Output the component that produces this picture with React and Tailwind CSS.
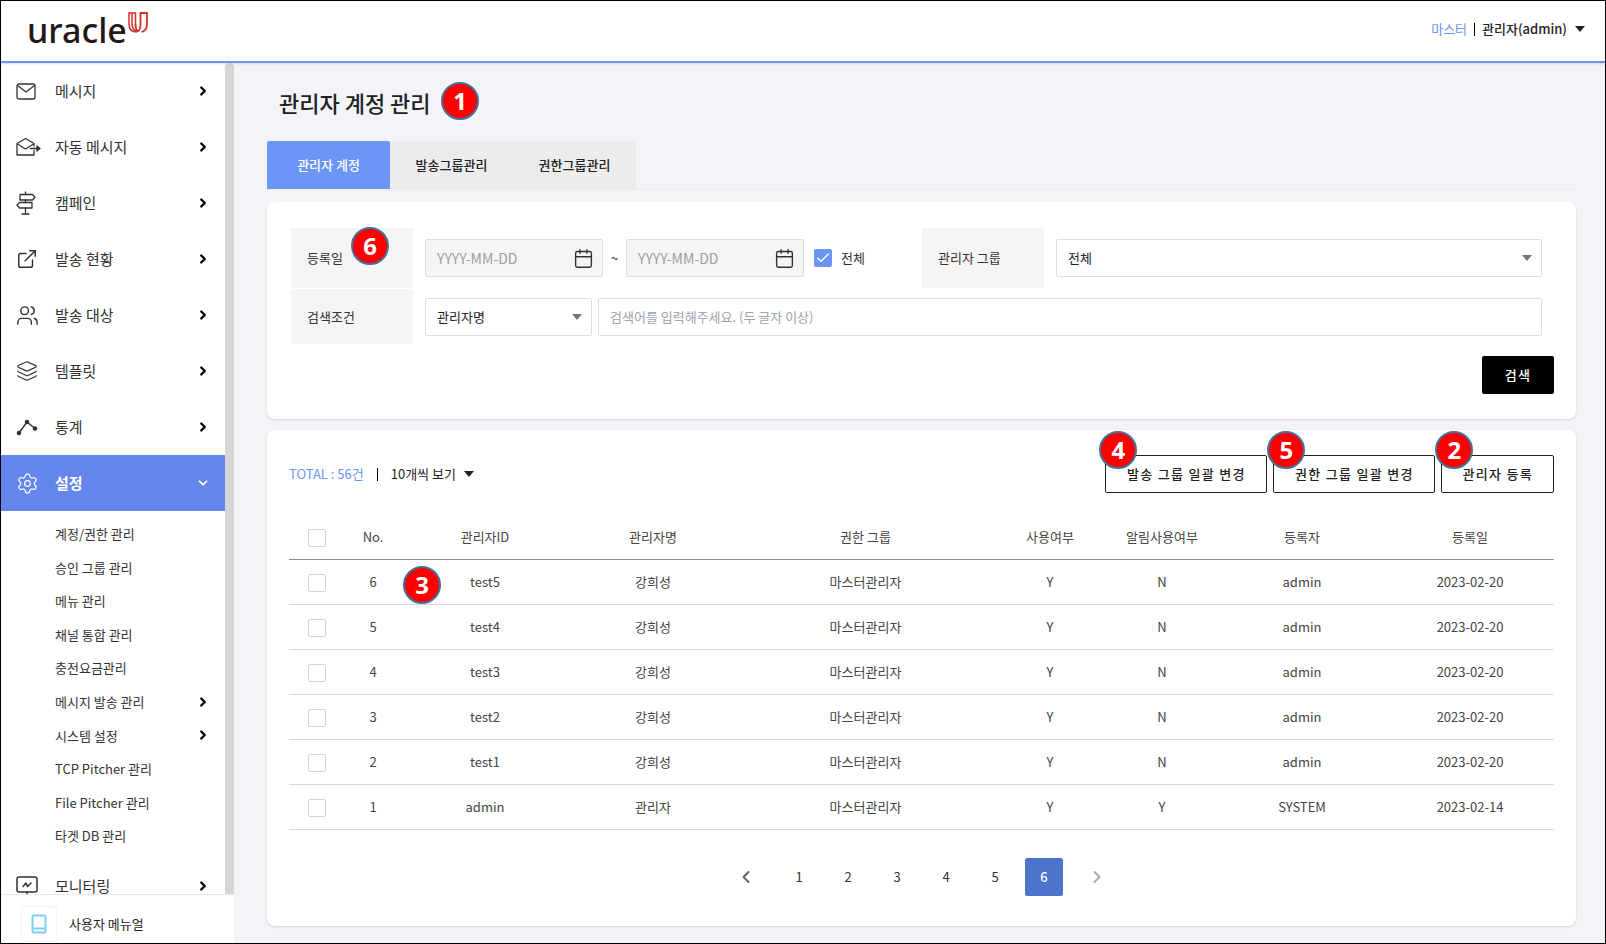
import React, { useState } from 'react'
import { Calendar, Check, ChevronDown, ChevronLeft, ChevronRight, ExternalLink, Layers, Settings, Users } from 'lucide-react'

const stroke = { fill: 'none', stroke: 'currentColor', strokeLinecap: 'round', strokeLinejoin: 'round' }

const MailIcon = () => (
  <svg width="20" height="17" viewBox="0 0 20 17" strokeWidth="1.3" {...stroke}>
    <rect x="1" y="1" width="18" height="15" rx="2" />
    <path d="M1.5 2.5 10 9 18.5 2.5" />
  </svg>
)

const AutoMailIcon = () => (
  <svg width="25" height="20" viewBox="0 0 25 20" strokeWidth="1.3" {...stroke}>
    <path d="M18 9V6.5L9.5 1.5 1 6.5V18h17v-4.500" />
    <path d="m1.5 7 8 5 8-5" />
    <path d="M14.500 11.500H23" />
    <path d="m21 9 3 2.500-3 2.500z" fill="currentColor" />
  </svg>
)

const SignpostIcon = () => (
  <svg width="20" height="24" viewBox="0 0 20 24" strokeWidth="1.3" {...stroke}>
    <path d="M9.5 1v2.5M9.5 9v2.5M9.5 17v6M6 23h7" />
    <path d="M4 3.5h12.500L19 6.200 16.500 9H4z" />
    <path d="M16 11.500H3.500L1 14.200 3.500 17H16z" />
  </svg>
)

const StatsIcon = () => (
  <svg width="22" height="18" viewBox="0 0 22 18" strokeWidth="1.4" {...stroke}>
    <path d="M3 15 11 4l8 6.500" />
    <g fill="currentColor" stroke="none">
      <circle cx="3" cy="15" r="2.300" />
      <circle cx="11" cy="4" r="2.300" />
      <circle cx="19" cy="10.500" r="2.300" />
    </g>
  </svg>
)

const MonitorIcon = () => (
  <svg width="22" height="20" viewBox="0 0 22 20" strokeWidth="1.5" {...stroke}>
    <rect x="1" y="1" width="20" height="15" rx="2" />
    <path d="m7 10.500 3-3.500 1.500 3.500L15 7M8 19h6M11 16v3" />
  </svg>
)

const ManualIcon = () => (
  <svg width="16" height="20" viewBox="0 0 16 20" fill="none" stroke="#7fd0ee" strokeWidth="2">
    <rect x="1.500" y="1.500" width="13" height="17" rx="1" />
    <path d="M1.500 14.500h13" />
  </svg>
)

const Caret = ({ className = '' }) => (
  <svg width="10" height="6" viewBox="0 0 10 6" className={className}>
    <path d="M0 0h10L5 6z" fill="currentColor" />
  </svg>
)

const menus = [
  { label: '메시지', icon: <MailIcon /> },
  { label: '자동 메시지', icon: <AutoMailIcon /> },
  { label: '캠페인', icon: <SignpostIcon /> },
  { label: '발송 현황', icon: <ExternalLink size={22} strokeWidth={1.6} /> },
  { label: '발송 대상', icon: <Users size={23} strokeWidth={1.5} /> },
  { label: '템플릿', icon: <Layers size={22} strokeWidth={1.3} /> },
  { label: '통계', icon: <StatsIcon /> }
]

const subMenus = [
  { label: '계정/권한 관리' },
  { label: '승인 그룹 관리' },
  { label: '메뉴 관리' },
  { label: '채널 통합 관리' },
  { label: '충전요금관리' },
  { label: '메시지 발송 관리', more: true },
  { label: '시스템 설정', more: true },
  { label: 'TCP Pitcher 관리' },
  { label: 'File Pitcher 관리' },
  { label: '타겟 DB 관리' }
]

const rows = [
  { no: 6, id: 'test5', name: '강희성', group: '마스터관리자', use: 'Y', alarm: 'N', by: 'admin', date: '2023-02-20' },
  { no: 5, id: 'test4', name: '강희성', group: '마스터관리자', use: 'Y', alarm: 'N', by: 'admin', date: '2023-02-20' },
  { no: 4, id: 'test3', name: '강희성', group: '마스터관리자', use: 'Y', alarm: 'N', by: 'admin', date: '2023-02-20' },
  { no: 3, id: 'test2', name: '강희성', group: '마스터관리자', use: 'Y', alarm: 'N', by: 'admin', date: '2023-02-20' },
  { no: 2, id: 'test1', name: '강희성', group: '마스터관리자', use: 'Y', alarm: 'N', by: 'admin', date: '2023-02-20' },
  { no: 1, id: 'admin', name: '관리자', group: '마스터관리자', use: 'Y', alarm: 'Y', by: 'SYSTEM', date: '2023-02-14' }
]

const Badge = ({ n, className }) => (
  <span className={`absolute z-10 flex size-[38px] items-center justify-center rounded-full border-2 border-[#41719c] bg-[#ff0000] font-['Noto_Sans'] text-2xl font-bold text-white ${className}`}>
    {n}
  </span>
)

const MenuItem = ({ icon, label, open = false }) => (
  <li>
    <a
      href="#"
      className={`flex h-14 items-center pr-[15px] text-[15px] ${open ? 'bg-[#6485ec] font-bold text-white' : 'text-[#333]'}`}
    >
      <span className="flex w-[54px] shrink-0 items-center pl-[15px]">{icon}</span>
      <span className="flex-1">{label}</span>
      {open
        ? <ChevronDown size={14} strokeWidth={3} />
        : <ChevronRight size={14} strokeWidth={4} className="text-black" />}
    </a>
  </li>
)

const Sidebar = () => (
  <aside className="flex w-[233px] shrink-0 flex-col bg-white">
    <div className="flex min-h-0 flex-1">
      <nav className="min-w-0 flex-1 overflow-hidden">
        <ul>
          {menus.map((m) => <MenuItem key={m.label} {...m} />)}
          <MenuItem label="설정" icon={<Settings size={23} strokeWidth={1.3} />} open />
          <li className="pt-[6px] pb-[5px]">
            <ul className="grid h-[336px] auto-rows-fr">
              {subMenus.map((s) => (
                <li key={s.label}>
                  <a href="#" className="flex h-full items-center pr-[15px] pl-[54px] text-[13px] text-[#333]">
                    <span className="flex-1">{s.label}</span>
                    {s.more && <ChevronRight size={14} strokeWidth={4} className="text-black" />}
                  </a>
                </li>
              ))}
            </ul>
          </li>
          <MenuItem label="모니터링" icon={<MonitorIcon />} />
        </ul>
      </nav>
      <div className="w-[9px] rounded-t-full bg-[#d6d6d6]" />
    </div>
    <a href="#" className="flex h-[49px] shrink-0 items-end gap-3 border-t border-gray-200 pb-px pl-5 text-[13px] text-[#222]">
      <span className="flex size-9 items-center justify-center rounded border border-gray-100">
        <ManualIcon />
      </span>
      <span className="leading-9">사용자 메뉴얼</span>
    </a>
  </aside>
)

const Header = () => (
  <header className="relative z-20 flex h-[62px] shrink-0 items-start justify-between border-b-2 border-[#6b95f7] bg-white pr-5 pl-[26px] shadow">
    <a href="#" className="flex items-start text-[#231815]">
      <span className="pt-[5px] font-['Noto_Sans'] text-[34px] leading-[48px] font-medium">uracle</span>
      <svg width="22" height="22" viewBox="0 0 22 22" className="mt-[11px]" fill="none" stroke="#d0312d" strokeWidth="1.800">
        <path d="M8.500 13V1H2v11c0 5 3 8 8 8M5 1v11c0 4 2 6.500 5.500 7.500" strokeWidth="1.500" />
        <path d="M8.500 12c0 4 .8 6 2.500 7.500" />
        <path d="M13.500 13V1H20v11c0 4.500-2 7-5.500 8M13.500 12c0 4-.8 6-2.500 7.500" />
      </svg>
    </a>
    <div className="flex items-center gap-[7px] pt-[18px] text-[13px] leading-5">
      <span className="text-[#6b95f7]">마스터</span>
      <span className="h-[13px] w-px bg-black" />
      <button type="button" className="flex items-center gap-2 font-medium text-[#222]">
        관리자(admin)
        <Caret />
      </button>
    </div>
  </header>
)

const DateField = ({ label }) => (
  <label className="flex h-[38px] w-[178px] items-center rounded-xs border border-[#dcdfe6] bg-[#f5f5f5] pr-2 pl-[11px]">
    <input type="text" aria-label={label} placeholder="YYYY-MM-DD" disabled className="w-full min-w-0 flex-1 text-sm placeholder:text-[#9e9e9e]" />
    <Calendar size={21} strokeWidth={1.6} className="shrink-0 text-[#333]" />
  </label>
)

const SelectField = ({ id, options, className }) => (
  <div className={`relative ${className}`}>
    <select id={id} className="h-[38px] w-full appearance-none rounded-xs border border-[#dcdfe6] bg-white px-[11px] text-[13px] text-[#222]">
      {options.map((o) => <option key={o}>{o}</option>)}
    </select>
    <Caret className="pointer-events-none absolute top-4 right-[10px] text-[#757575]" />
  </div>
)

const CheckField = ({ id, label, checked, onChange }) => (
  <span className="relative inline-flex size-[18px] shrink-0 align-middle">
    <input
      id={id}
      type="checkbox"
      aria-label={label}
      checked={checked}
      onChange={onChange}
      className="size-[18px] appearance-none rounded-xs border border-[#d4d4d4] bg-white checked:border-[#6b95f7] checked:bg-[#6b95f7]"
    />
    {checked && <Check size={16} strokeWidth={2} className="pointer-events-none absolute top-px left-px text-white" />}
  </span>
)

const SearchPanel = () => {
  const [all, setAll] = useState(true)
  return (
    <section className="rounded-lg bg-white px-[22px] pt-[26px] pb-[25px] shadow">
      <form className="text-[13px] text-[#333]" onSubmit={(e) => e.preventDefault()}>
        <div className="flex h-[60px] items-center pr-3">
          <div className="relative ml-[2px] flex h-full w-[122px] shrink-0 items-center bg-[#f5f5f5] pl-4">
            등록일
            <Badge n={6} className="-top-px left-[60px]" />
          </div>
          <div className="ml-3 flex w-[497px] shrink-0 items-center">
            <DateField label="등록일 시작" />
            <span className="w-[23px] text-center">~</span>
            <DateField label="등록일 종료" />
            <span className="ml-[10px] flex items-center gap-[9px]">
              <CheckField id="all-dates" checked={all} onChange={() => setAll(!all)} />
              <label htmlFor="all-dates">전체</label>
            </span>
          </div>
          <label htmlFor="group" className="flex h-full w-[122px] shrink-0 items-center bg-[#f5f5f5] pl-4">관리자 그룹</label>
          <SelectField id="group" options={['전체']} className="ml-3 flex-1" />
        </div>
        <div className="mt-px flex h-[55px] items-center pr-3">
          <label htmlFor="cond" className="ml-[2px] flex h-full w-[122px] shrink-0 items-center bg-[#f5f5f5] pl-4">검색조건</label>
          <SelectField id="cond" options={['관리자명', '관리자ID']} className="ml-3 w-[167px]" />
          <input
            type="text"
            aria-label="검색어"
            placeholder="검색어를 입력해주세요. (두 글자 이상)"
            className="ml-[6px] h-[38px] flex-1 rounded-xs border border-[#dcdfe6] px-[11px] placeholder:text-[#9ca3af]"
          />
        </div>
        <div className="mt-3 flex justify-end">
          <button type="submit" className="h-[38px] w-[72px] rounded-xs bg-black font-medium tracking-widest text-white">검색</button>
        </div>
      </form>
    </section>
  )
}

const OutlineButton = ({ badge, className = '', children }) => (
  <div className="relative">
    <Badge n={badge} className="-top-6 -left-[6px]" />
    <button type="button" className={`h-[38px] rounded-xs border border-[#222] px-5 text-[13px] font-medium tracking-widest text-[#222] ${className}`}>
      {children}
    </button>
  </div>
)

const ListPanel = () => {
  const [checked, setChecked] = useState([])
  const toggle = (no) => setChecked(checked.includes(no) ? checked.filter((n) => n !== no) : [...checked, no])
  const allChecked = checked.length === rows.length

  return (
    <section className="mt-[11px] rounded-lg bg-white px-[22px] pt-[25px] pb-[30px] shadow">
      <div className="flex items-center justify-between">
        <div className="flex items-center text-[13px]">
          <span className="text-[#6b95f7]">TOTAL : 56건</span>
          <span className="mx-[13px] h-[13px] w-px bg-black" />
          <button type="button" className="flex items-center gap-2 text-[#222]">
            10개씩 보기
            <Caret />
          </button>
        </div>
        <div className="flex gap-[6px]">
          <OutlineButton badge={4} className="min-w-[162px]">발송 그룹 일괄 변경</OutlineButton>
          <OutlineButton badge={5} className="min-w-[162px]">권한 그룹 일괄 변경</OutlineButton>
          <OutlineButton badge={2}>관리자 등록</OutlineButton>
        </div>
      </div>

      <table className="mt-[22px] w-full table-fixed text-center text-[13px] text-[#444]">
        <colgroup>
          <col className="w-14" />
          <col className="w-14" />
          <col className="w-[168px]" />
          <col className="w-[168px]" />
          <col />
          <col className="w-28" />
          <col className="w-28" />
          <col className="w-[168px]" />
          <col className="w-[168px]" />
        </colgroup>
        <thead>
          <tr className="h-11 border-b border-[#8c8c8c]">
            <th className="font-normal">
              <CheckField label="전체 선택" checked={allChecked} onChange={() => setChecked(allChecked ? [] : rows.map((r) => r.no))} />
            </th>
            {['No.', '관리자ID', '관리자명', '권한 그룹', '사용여부', '알림사용여부', '등록자', '등록일'].map((h) => (
              <th key={h} className="font-normal">{h}</th>
            ))}
          </tr>
        </thead>
        <tbody>
          {rows.map((r) => (
            <tr key={r.no} className="h-[45px] border-b border-[#d9d9d9]">
              <td><CheckField label={`${r.no} 선택`} checked={checked.includes(r.no)} onChange={() => toggle(r.no)} /></td>
              <td>{r.no}</td>
              <td className="relative">
                {r.no === 6 && <Badge n={3} className="top-[6px] left-[2px]" />}
                {r.id}
              </td>
              <td>{r.name}</td>
              <td>{r.group}</td>
              <td>{r.use}</td>
              <td>{r.alarm}</td>
              <td>{r.by}</td>
              <td>{r.date}</td>
            </tr>
          ))}
        </tbody>
      </table>

      <nav className="mt-7 flex items-center justify-center gap-[11px] text-[13px] text-[#333]">
        <button type="button" aria-label="이전" className="mr-1 flex size-[38px] items-center justify-center text-[#666]">
          <ChevronLeft size={20} strokeWidth={2.5} />
        </button>
        {[1, 2, 3, 4, 5, 6].map((p) => (
          <button key={p} type="button" className={`size-[38px] rounded-xs ${p === 6 ? 'bg-[#4d74cb] font-medium text-white' : ''}`}>{p}</button>
        ))}
        <button type="button" aria-label="다음" disabled className="ml-1 flex size-[38px] items-center justify-center text-[#aaa]">
          <ChevronRight size={20} strokeWidth={2.5} />
        </button>
      </nav>
    </section>
  )
}

const App = () => (
  <div className="flex h-screen flex-col overflow-hidden border border-black bg-[#f3f4f8] font-['Noto_Sans_CJK_KR',sans-serif]">
    <Header />
    <div className="flex min-h-0 flex-1">
      <Sidebar />
      <main className="min-w-0 flex-1 overflow-hidden pr-[29px] pl-[33px]">
        <div className="flex h-[78px] items-center pl-3">
          <h1 className="relative text-[22px] font-medium text-[#222]">
            관리자 계정 관리
            <Badge n={1} className="-top-1 left-[162px]" />
          </h1>
        </div>
        <div className="mb-3 flex border-b border-[#ececec] text-[13px] font-medium text-[#222]">
          <button type="button" className="h-12 w-[123px] rounded-t-xs bg-[#6b95f7] text-white">관리자 계정</button>
          <button type="button" className="h-12 w-[123px] bg-[#ececec]">발송그룹관리</button>
          <button type="button" className="h-12 w-[123px] bg-[#ececec]">권한그룹관리</button>
        </div>
        <SearchPanel />
        <ListPanel />
      </main>
    </div>
  </div>
)

export default App
